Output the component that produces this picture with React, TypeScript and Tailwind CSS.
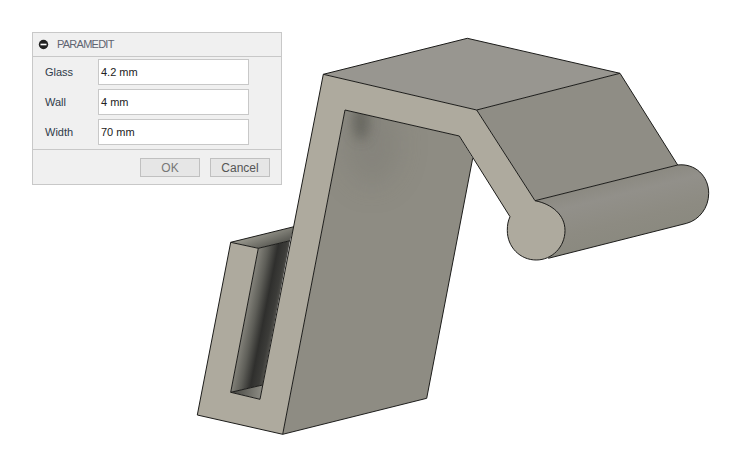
const FIELDS = [
  { label: "Glass", value: "4.2 mm" },
  { label: "Wall", value: "4 mm" },
  { label: "Width", value: "70 mm" },
]

function Bracket() {
  return (
    <svg className="absolute inset-0" width="741" height="457" viewBox="0 0 741 457" fill="none">
      <defs>
        <linearGradient id="slot" gradientUnits="userSpaceOnUse" x1="244.6" y1="320" x2="275" y2="326">
          <stop offset="0" stopColor="#84837b" />
          <stop offset="0.3" stopColor="#5e5e58" />
          <stop offset="0.6" stopColor="#2f2f2d" />
          <stop offset="0.85" stopColor="#3c3c39" />
          <stop offset="1" stopColor="#55544f" />
        </linearGradient>
        <linearGradient id="slotTop" gradientUnits="userSpaceOnUse" x1="268" y1="247" x2="262" y2="231">
          <stop offset="0" stopColor="#5c5c56" />
          <stop offset="1" stopColor="#9b9a90" />
        </linearGradient>
        <linearGradient id="slotFloor" gradientUnits="userSpaceOnUse" x1="234" y1="390" x2="262" y2="393">
          <stop offset="0" stopColor="#4a4a45" />
          <stop offset="1" stopColor="#8d8c84" />
        </linearGradient>
        <linearGradient id="roller" gradientUnits="userSpaceOnUse" x1="615" y1="182" x2="630" y2="242">
          <stop offset="0" stopColor="#8c8a82" />
          <stop offset="0.22" stopColor="#92908a" />
          <stop offset="0.65" stopColor="#8d8b82" />
          <stop offset="1" stopColor="#8a897f" />
        </linearGradient>
        <filter id="soft" x="-150%" y="-150%" width="400%" height="400%">
          <feGaussianBlur stdDeviation="6" />
        </filter>
        <filter id="softer" x="-100%" y="-100%" width="300%" height="300%">
          <feGaussianBlur stdDeviation="14" />
        </filter>
        <clipPath id="inner">
          <path d="M345 110 L459.3 136 L472.7 158.3 L426.7 398.3 L282.7 434.3 Z" />
        </clipPath>
      </defs>

      {/* faces */}
      <path d="M323.3 74.3 L467.3 38.3 L620 73.3 L476.7 110 Z" fill="#989690" />
      <path d="M476.7 110 L620 73.3 L677.7 165 L535 200.7 Z" fill="#8f8d85" />
      <path d="M345 110 L459.3 136 L472.7 158.3 L426.7 398.3 L282.7 434.3 Z" fill="#8e8c83" />
      <g clipPath="url(#inner)">
        <ellipse cx="372" cy="145" rx="28" ry="42" fill="#77766f" opacity="0.35" filter="url(#softer)" />
        <ellipse cx="361" cy="122" rx="8" ry="18" fill="#5f5e58" opacity="0.8" filter="url(#soft)" />
      </g>
      <path d="M230.7 242.3 L294 226.7 L290 240.7 L258.3 248.3 Z" fill="url(#slotTop)" />
      <path d="M258.3 248.3 L290 240.7 L262.7 385 L230.7 392.3 Z" fill="url(#slot)" />
      <path d="M230.7 392.3 L262.7 385 L260 399.3 Z" fill="url(#slotFloor)" />
      <path
        d="M535 200.7 L677.7 165 C695 163 708.7 176 708.7 193.3 C708.7 208 699 220 686.7 223.3 L548.3 258.3 Z"
        fill="url(#roller)"
      />
      <path
        d="M323.3 74.3 L476.7 110 L535 200.7 C552 204 565 215 565 230.4 C565 247 552 260 536.2 260 C520 260 507.3 247 507.3 230.4 C507.3 225 508 221 510 216.7 L459.3 136 L345 110 L282.7 434.3 L197.3 415 L230.7 242.3 L258.3 248.3 L230.7 392.3 L260 399.3 Z"
        fill="#aeaa9e"
      />

      {/* edges */}
      <g stroke="#1c1c1a" strokeWidth="1" strokeLinejoin="round">
        <path d="M323.3 74.3 L467.3 38.3 L620 73.3 L677.7 165" />
        <path d="M323.3 74.3 L476.7 110 L535 200.7 L677.7 165" />
        <path d="M476.7 110 L620 73.3" />
        <path d="M323.3 74.3 L260 399.3 L230.7 392.3 L258.3 248.3 L230.7 242.3 L197.3 415 L282.7 434.3 L345 110 L459.3 136 L510 216.7" />
        <path d="M230.7 242.3 L294 226.7" />
        <path d="M258.3 248.3 L290 240.7" />
        <path d="M230.7 392.3 L262.7 385" />
        <path d="M282.7 434.3 L426.7 398.3 L472.7 158.3" />
        <path d="M535 200.7 C552 204 565 215 565 230.4 C565 247 552 260 536.2 260 C520 260 507.3 247 507.3 230.4 C507.3 225 508 221 510 216.7" />
        <path d="M548.3 258.3 L686.7 223.3 C699 220 708.7 208 708.7 193.3 C708.7 176 695 163 677.7 165" />
      </g>
    </svg>
  )
}

function ParamDialog() {
  return (
    <div className="relative flex h-[153px] w-[250px] flex-col border border-[#c8c8c8] bg-[#f0f0f0] text-[11px] text-[#333333]">
      <div className="flex h-[24px] shrink-0 items-center gap-[8px] border-b border-[#c8c8c8] pl-[5px]">
        <svg width="11" height="11" viewBox="0 0 11 11">
          <circle cx="5.5" cy="5.5" r="4.7" fill="#222222" />
          <rect x="2.5" y="4.7" width="6" height="1.6" fill="#ffffff" />
        </svg>
        <span className="tracking-[-0.75px] text-[#5f6470]">PARAMEDIT</span>
      </div>
      <div className="flex flex-col gap-[4px] pt-[2px] pb-[4px]">
        {FIELDS.map((f) => (
          <div key={f.label} className="flex items-center">
            <span className="w-[65px] pl-[12px] text-[#2f3b4a]">{f.label}</span>
            <div className="flex h-[26px] w-[151px] items-center border border-[#c8c8c8] bg-white pl-[2px] text-[#222222]">
              {f.value}
            </div>
          </div>
        ))}
      </div>
      <div className="flex flex-1 justify-end gap-[10px] border-t border-[#c8c8c8] pt-[8px] pr-[11px] text-[12px]">
        <div className="flex h-[19px] w-[60px] items-center justify-center border border-[#c0c0c0] bg-[#e6e6e6] text-[#777777]">
          OK
        </div>
        <div className="flex h-[19px] w-[60px] items-center justify-center border border-[#c0c0c0] bg-[#e6e6e6] text-[#555555]">
          Cancel
        </div>
      </div>
    </div>
  )
}

export default function App() {
  return (
    <div className="relative h-[457px] w-[741px] overflow-hidden bg-white pt-[32px] pl-[32px] font-['Liberation_Sans',Arial,sans-serif]">
      <Bracket />
      <ParamDialog />
    </div>
  )
}
